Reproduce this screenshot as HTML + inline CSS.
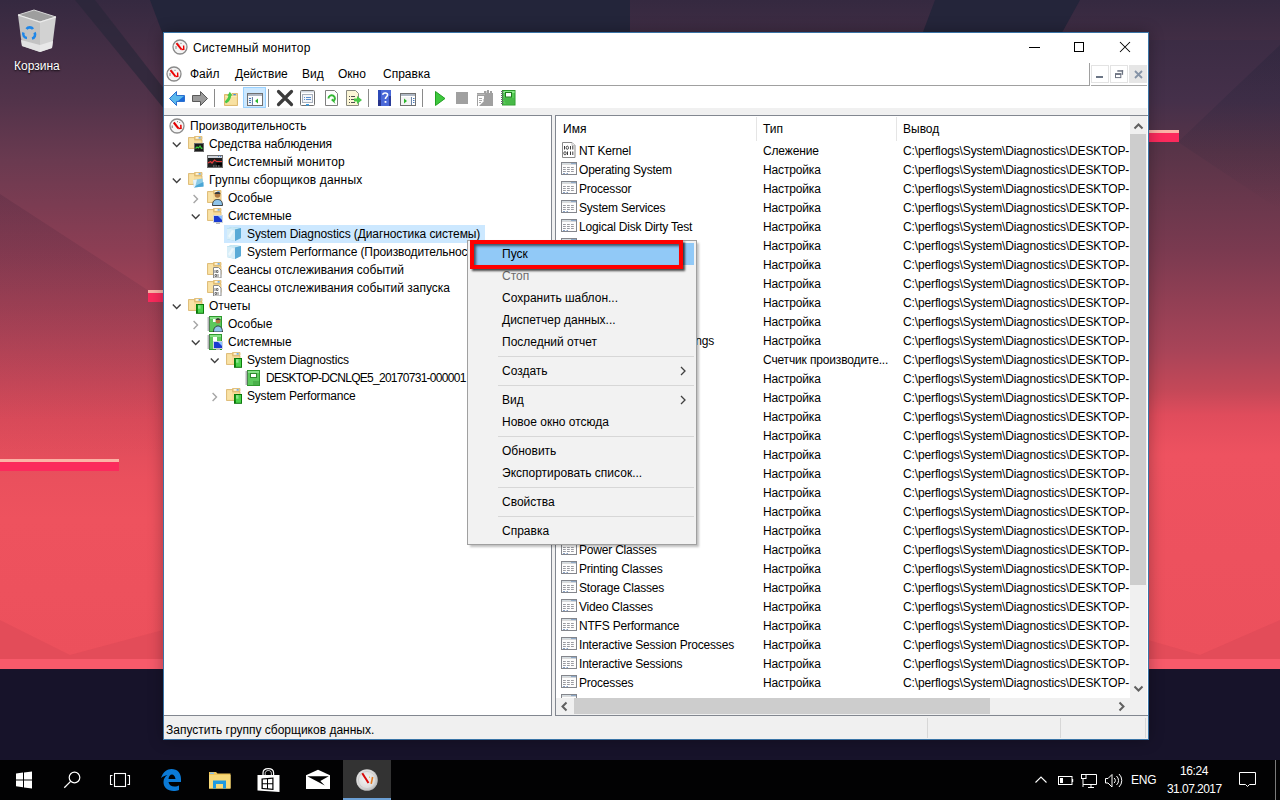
<!DOCTYPE html>
<html><head><meta charset="utf-8">
<style>
*{margin:0;padding:0;box-sizing:border-box}
html,body{width:1280px;height:800px;overflow:hidden;background:#17132a}
body{position:relative;font-family:"Liberation Sans",sans-serif;font-size:12px;color:#000}
.a{position:absolute}
.t{position:absolute;white-space:nowrap;line-height:14px;height:14px}
svg{display:block}
</style></head><body>

<svg width="0" height="0" style="position:absolute">
<defs>
<symbol id="i-perf" viewBox="0 0 16 16"><circle cx="8" cy="8" r="7" fill="#f6f6f6" stroke="#8c8c8c" stroke-width="1.3"/><path d="M3.2 7.5v2.5M5 4.2l.8.8M8.5 3.2v1M11 4l-.6.8" stroke="#666" stroke-width="0.9"/><path d="M4.8 4.5 L9.4 10.4" stroke="#e30000" stroke-width="2.1"/><path d="M9.3 10.5 L12 10.3 L11.8 6.8" stroke="#e30000" stroke-width="1.5" fill="none"/></symbol>
<symbol id="fold" viewBox="0 0 16 16"><path d="M6.5 0.5h7.5v3h-7.5z" fill="#f3d48c" stroke="#dcb66c" stroke-width="0.8"/><rect x="8" y="1.3" width="4.5" height="1.2" fill="#fff"/><rect x="10.5" y="1.2" width="2.3" height="1.4" rx="0.6" fill="#4a9ae8"/><path d="M0.5 1.5h6v2.5h7.5v8.5h-13.5z" fill="#f3d48c" stroke="#d8b268" stroke-width="0.8"/><rect x="1.2" y="2.3" width="5" height="9.5" fill="#f9e2a6"/><rect x="6.2" y="4.6" width="7.2" height="7.2" fill="#f7dc9c"/></symbol>
<symbol id="i-fmon" viewBox="0 0 16 16"><use href="#fold"/><rect x="6.5" y="7.5" width="9" height="8" fill="#1c1c1c" stroke="#6a6a6a"/><path d="M7.5 12.5 L9 11 L10.5 12 L12 10 L13.5 12.5 L14.5 12" fill="none" stroke="#3ad13a" stroke-width="1.2"/></symbol>
<symbol id="i-mon" viewBox="0 0 16 16"><rect x="0.5" y="1.5" width="15" height="12" fill="#1e1e1e" stroke="#6e6e6e"/><rect x="1" y="2" width="14" height="2" fill="#d0d4da"/><rect x="11" y="2" width="1" height="1" fill="#5a8ad0"/><rect x="13" y="2" width="1" height="1" fill="#5a8ad0"/><path d="M1 9 L3.5 7.5 L5 9 L7.5 6 L9.5 7.5 L15 7.5" fill="none" stroke="#e03a3a" stroke-width="1.2"/><rect x="9.5" y="9" width="5.5" height="2.5" fill="#000"/><path d="M6 12h1.5M8.5 12h1.5M11 12h1.5" stroke="#aaa" stroke-width="0.8"/></symbol>
<symbol id="i-fdc" viewBox="0 0 16 16"><use href="#fold"/><path d="M5 8 L14.5 6.5 L15.5 14.5 L6 15.5 Z" fill="#8ccbe6"/><path d="M5 8 L9 7.5 L7 15.5 L6 15.5 Z" fill="#e8f4fa"/><path d="M9 13 L15.5 10 L15.5 14.5 L6 15.5 Z" fill="#4aa6d6"/></symbol>
<symbol id="i-fuser" viewBox="0 0 16 16"><use href="#fold"/><circle cx="10.5" cy="5" r="2.8" fill="#b07840"/><path d="M7.5 4 C8 1 13 1 13.5 4 Z" fill="#3a3a3a"/><path d="M5.5 15.5 C5.5 11 7.5 9.5 10.5 9.5 C13.5 9.5 15.5 11 15.5 15.5 Z" fill="#8ec4ea" stroke="#1a1a1a" stroke-width="0.8"/></symbol>
<symbol id="i-fsys" viewBox="0 0 16 16"><use href="#fold"/><rect x="6.5" y="7.5" width="9" height="7" fill="#1a3ad0" stroke="#cfd6de"/><path d="M11 8 L15 8 L15 12 Z" fill="#8cc0ff"/><rect x="9" y="14.5" width="4" height="1.5" fill="#b8b8b8"/></symbol>
<symbol id="i-cube" viewBox="0 0 16 16"><path d="M1 2.5 L6 1 L15 2 L15 12 L9 15 L1 13 Z" fill="#8ecbe6"/><path d="M1 2.5 L6 1 L15 2 L9 3.5 Z" fill="#c8e8f4"/><path d="M1 2.5 L9 3.5 L9 15 L1 13 Z" fill="#d8eef8"/><path d="M9 3.5 L15 2 L15 12 L9 15 Z" fill="#5aaad6"/><path d="M2 10 L6 4 L8 5 L4 12 Z" fill="#fff" opacity="0.5"/></symbol>
<symbol id="i-fbin" viewBox="0 0 16 16"><use href="#fold"/><path d="M6.5 5.5h5l2.5 2.5v8h-7.5z" fill="#fff" stroke="#8a8a8a"/><path d="M8 8v3M9.5 8.5h1.5v2h-1.5zM8 12.5h1.5v2h-1.5zM11 12v3" fill="none" stroke="#555" stroke-width="0.8"/></symbol>
<symbol id="grb" viewBox="0 0 16 16"><rect x="8" y="6" width="8" height="9.8" fill="#067206"/><rect x="9.8" y="7" width="5.3" height="7.8" fill="#4bd24b"/><rect x="10" y="7.2" width="2.5" height="3.5" fill="#a8eca8" opacity="0.7"/><rect x="8.6" y="6.6" width="1.2" height="6" fill="#149a14"/></symbol>
<symbol id="i-frep" viewBox="0 0 16 16"><use href="#fold"/><use href="#grb"/></symbol>
<symbol id="nb" viewBox="0 0 16 16"><rect x="2.5" y="0.5" width="12" height="15" fill="#5cc85c" stroke="#2e9a2e"/><rect x="3" y="1" width="11" height="2" fill="#88e088"/><path d="M0.5 2h2.5M0.5 4h2.5M0.5 6h2.5M0.5 8h2.5M0.5 10h2.5M0.5 12h2.5M0.5 14h2.5" stroke="#6a6a70" stroke-width="1"/></symbol>
<symbol id="i-ruser" viewBox="0 0 16 16"><use href="#nb"/><rect x="6" y="3" width="3" height="3" fill="#fff"/><circle cx="11" cy="5" r="2.5" fill="#b07840"/><path d="M8.5 4 C9 1.5 13 1.5 13.5 4 Z" fill="#3a3a3a"/><path d="M6.5 16 C6.5 12 8.5 10 11 10 C13.5 10 15.5 12 15.5 16 Z" fill="#8ec4ea" stroke="#1a1a1a" stroke-width="0.8"/></symbol>
<symbol id="i-rsys" viewBox="0 0 16 16"><use href="#nb"/><rect x="6" y="3" width="4" height="4" fill="#fff"/><rect x="6.5" y="7.5" width="9" height="7" fill="#1a3ad0" stroke="#cfd6de"/><path d="M11 8 L15 8 L15 12 Z" fill="#8cc0ff"/><rect x="9" y="14.5" width="4" height="1.5" fill="#b8b8b8"/></symbol>
<symbol id="i-book" viewBox="0 0 16 16"><use href="#nb"/><rect x="5.5" y="3.5" width="6" height="4" fill="#fff" stroke="#2e8a2e"/><path d="M8 11h6v4h-6z" fill="#4ab04a"/></symbol>
<symbol id="i-lst" viewBox="0 0 16 16"><rect x="0.5" y="0.5" width="15" height="12" fill="#fdfdfd" stroke="#84868c"/><rect x="1" y="1" width="14" height="1.2" fill="#d4dce0"/><rect x="1" y="2.2" width="14" height="0.6" fill="#c8c8c8"/><path d="M10.5 1.6h1M12.5 1.6h1M14.5 1.6h0.6" stroke="#3a6aa8" stroke-width="1"/><path d="M2 5.5h2.8M6 5.5h2.8M10 5.5h2.8M2 7.5h2.8M6 7.5h2.8M10 7.5h2.8M2 9.5h2.8M6 9.5h2.8M10 9.5h2.8" stroke="#8e9096" stroke-width="0.9"/><path d="M2 11.5h2M5.5 11.5h1.5" stroke="#6a8ab8" stroke-width="0.8"/></symbol>
<symbol id="i-lbin" viewBox="0 0 16 16"><path d="M1.5 0.5h9.5l3 3v12h-12.5z" fill="#fff" stroke="#8a8a8a"/><path d="M11 0.5v3h3" fill="#eee" stroke="#aaa" stroke-width="0.7"/><path d="M3.5 4v3.5M9.5 4v3.5M11.8 4v3.5M6.5 9.5v3.5M9.5 9.5v3.5M11.8 9.5v3.5" stroke="#3a3a3a" stroke-width="1"/><ellipse cx="6.3" cy="5.75" rx="1.2" ry="1.6" fill="none" stroke="#3a3a3a" stroke-width="0.9"/><ellipse cx="4" cy="11.25" rx="1.2" ry="1.6" fill="none" stroke="#3a3a3a" stroke-width="0.9"/></symbol>
</defs></svg>

<!-- desktop background -->
<svg class="a" style="left:0;top:0" width="1280" height="760">
<defs>
<linearGradient id="bg" x1="0" y1="0" x2="0" y2="1">
<stop offset="0" stop-color="#352940"/>
<stop offset="0.152" stop-color="#52334a"/>
<stop offset="0.243" stop-color="#6a3a50"/>
<stop offset="0.379" stop-color="#8c3e54"/>
<stop offset="0.516" stop-color="#b54558"/>
<stop offset="0.637" stop-color="#dc4b5a"/>
<stop offset="0.728" stop-color="#ea505d"/>
<stop offset="0.789" stop-color="#ee525e"/>
<stop offset="1" stop-color="#ec505c"/>
</linearGradient>
</defs>
<rect x="0" y="0" width="1280" height="659" fill="url(#bg)"/>
<linearGradient id="bgr" x1="0" y1="0" x2="0" y2="659" gradientUnits="userSpaceOnUse">
<stop offset="0" stop-color="#352940"/>
<stop offset="0.152" stop-color="#45304a"/>
<stop offset="0.228" stop-color="#583448"/>
<stop offset="0.379" stop-color="#7a3a50"/>
<stop offset="0.531" stop-color="#a84458"/>
<stop offset="0.592" stop-color="#c44858"/>
<stop offset="0.630" stop-color="#e04c5c"/>
<stop offset="0.690" stop-color="#ee5260"/>
<stop offset="1" stop-color="#ec505c"/>
</linearGradient>
<rect x="1148" y="40" width="132" height="619" fill="url(#bgr)"/>
<polygon points="150,0 630,0 630,40 165,40" fill="#23253a"/>
<polygon points="935,0 1080,0 1058,40 920,40" fill="#24253a"/>
<polygon points="75,0 95,0 165,90 165,110" fill="#2a2639" opacity="0.7"/>
<linearGradient id="wg" x1="0" y1="0" x2="0" y2="1"><stop offset="0" stop-color="#1e2036" stop-opacity="0.3"/><stop offset="1" stop-color="#1e2036" stop-opacity="0"/></linearGradient><polygon points="1280,45 1178,142 1280,210" fill="url(#wg)"/>
<polygon points="0,620 70,655 163,630 163,659 0,659" fill="#c8404e" opacity="0.25"/>
<polygon points="1148,640 1200,655 1280,620 1280,659 1148,659" fill="#c8404e" opacity="0.25"/>
<linearGradient id="lg2" x1="0" y1="0" x2="0" y2="1"><stop offset="0" stop-color="#301830" stop-opacity="0.16"/><stop offset="1" stop-color="#301830" stop-opacity="0"/></linearGradient><polygon points="0,194 163,300 163,460 0,460" fill="url(#lg2)"/>
<rect x="0" y="659" width="1280" height="10" fill="#f75a6a"/>
<rect x="0" y="669" width="1280" height="91" fill="#17132a"/>
<rect x="0" y="459" width="119" height="3" fill="#fbb3a6"/>
<rect x="0" y="462" width="119" height="9" fill="#fb2a5c"/>
<rect x="148" y="290" width="15" height="3" fill="#fbb3a6"/>
<rect x="148" y="293" width="15" height="9" fill="#fb2a5c"/>
<rect x="1149" y="130" width="30" height="3" fill="#fbb3a6"/>
<rect x="1149" y="133" width="30" height="9" fill="#fb2a5c"/>
</svg>

<!-- recycle bin -->
<svg class="a" style="left:17px;top:9px" width="40" height="44" viewBox="17 9 40 44">
<polygon points="18,15 34,10 56,17 40,22" fill="#9e9e9e" stroke="#d8d8d8" stroke-width="1"/>
<polygon points="18,15 40,22 40,52 22,46" fill="#c2c2c2"/>
<polygon points="40,22 56,17 52,48 40,52" fill="#d2d2d2"/>
<polygon points="21,40 40,45 40,52 22,46" fill="#e2e2e2"/>
<polygon points="40,45 53,41 52,48 40,52" fill="#e8e8e8"/>
<path d="M18,15 L40,22 L56,17" fill="none" stroke="#ececec" stroke-width="1.2"/>
<path d="M26.5 29 a4 4 0 0 1 6.5 0 M34.5 32.5 a4 4 0 0 1 -2.5 6 M27 38 a4 4 0 0 1 -3.5 -5.5" fill="none" stroke="#1e86e8" stroke-width="2.6"/>
</svg>
<div class="t" style="left:14px;top:59px;color:#fff;text-shadow:0 1px 2px #000">Корзина</div>

<div id="win" class="a" style="left:163px;top:32px;width:986px;height:708px;background:#fff;border:1px solid #3a74a6;box-shadow:0 0 14px rgba(0,0,0,0.3)"></div>
<!-- title -->
<svg class="a" style="left:172px;top:39px" width="16" height="16" viewBox="0 0 16 16"><circle cx="8" cy="8" r="7" fill="#f4f4f4" stroke="#8a8a8a" stroke-width="1.3"/><path d="M4.5 4.2 L9.5 10.5" stroke="#e00" stroke-width="2"/><path d="M9.5 10.5 L11.8 10.3 L11.6 6.5" stroke="#e00" stroke-width="1.4" fill="none"/><path d="M4 7v3M6 4.5l1 1M9 3.8v1.2" stroke="#777" stroke-width="0.9"/></svg>
<div class="t" style="left:193px;top:41px;letter-spacing:0.22px">Системный монитор</div>
<div class="a" style="left:1029px;top:47px;width:11px;height:1px;background:#000"></div>
<div class="a" style="left:1074px;top:42px;width:10px;height:10px;border:1px solid #000"></div>
<svg class="a" style="left:1119px;top:41px" width="12" height="12" viewBox="0 0 12 12"><path d="M1 1L11 11M11 1L1 11" stroke="#000" stroke-width="1.05"/></svg>

<!-- menu bar -->
<svg class="a" style="left:166px;top:66px" width="16" height="16" viewBox="0 0 16 16"><circle cx="8" cy="8" r="7" fill="#f4f4f4" stroke="#8a8a8a" stroke-width="1.3"/><path d="M4.5 4.2 L9.5 10.5" stroke="#e00" stroke-width="2"/><path d="M9.5 10.5 L11.8 10.3 L11.6 6.5" stroke="#e00" stroke-width="1.4" fill="none"/><path d="M4 7v3M6 4.5l1 1M9 3.8v1.2" stroke="#777" stroke-width="0.9"/></svg>
<div class="t" style="left:190px;top:67px">Файл</div>
<div class="t" style="left:235px;top:67px">Действие</div>
<div class="t" style="left:302px;top:67px">Вид</div>
<div class="t" style="left:338px;top:67px">Окно</div>
<div class="t" style="left:383px;top:67px">Справка</div>
<div class="a" style="left:164px;top:85px;width:925px;height:1px;background:#a0a0a0"></div>
<div class="a" style="left:1089px;top:63px;width:1px;height:23px;background:#a0a0a0"></div>
<div class="a" style="left:1091px;top:85px;width:56px;height:1px;background:#a8a8a8"></div>
<div class="a" style="left:1091px;top:65px;width:18px;height:18px;border:1px solid #e3e3e3;background:#fff"></div>
<div class="a" style="left:1096px;top:76px;width:7px;height:2px;background:#6b7585"></div>
<div class="a" style="left:1110px;top:65px;width:18px;height:18px;border:1px solid #e3e3e3;background:#fff"></div>
<svg class="a" style="left:1114px;top:69px" width="11" height="11" viewBox="1114 69 11 11"><rect x="1117.3" y="70.2" width="5.8" height="1.5" fill="#6b7280"/><rect x="1121.8" y="70.2" width="1.3" height="4.6" fill="#6b7280"/><rect x="1115.5" y="73.8" width="5.3" height="3.8" fill="none" stroke="#6b7280" stroke-width="1"/><rect x="1115" y="73.3" width="6.3" height="1.6" fill="#6b7280"/></svg>
<div class="a" style="left:1129px;top:65px;width:18px;height:18px;background:#e6e6e6"></div>
<svg class="a" style="left:1134px;top:70px" width="9" height="9" viewBox="0 0 9 9"><path d="M1 1L8 8M8 1L1 8" stroke="#8593a6" stroke-width="1.8"/></svg>

<!-- toolbar strip -->
<div class="a" style="left:164px;top:108px;width:983px;height:7px;background:#f0f0f0"></div>
<svg class="a" style="left:164px;top:86px" width="360" height="22" viewBox="164 86 360 22">
<!-- back -->
<path d="M169.5 98.5 L176.5 91.5 L176.5 95.5 L184.5 95.5 L184.5 101.5 L176.5 101.5 L176.5 105.5 Z" fill="#5ab8ec" stroke="#2a6fcf" stroke-width="1"/>
<path d="M178 101 L184 96 L184 101 Z" fill="#1a6ad8"/>
<!-- forward -->
<path d="M207.5 98.5 L200.5 91.5 L200.5 95.5 L192.5 95.5 L192.5 101.5 L200.5 101.5 L200.5 105.5 Z" fill="#9a9a9a" stroke="#5a5a5a" stroke-width="1"/>
<rect x="214" y="89" width="1" height="18" fill="#8a8a8a"/>
<!-- up folder -->
<path d="M224.5 94.5 H231 L232 93.5 H237.5 V105.5 H224.5 Z" fill="#f2d289" stroke="#d6ad5c" stroke-width="0.8"/>
<rect x="225.3" y="96.5" width="11.4" height="8.3" fill="#f8e1a2"/>
<rect x="225.3" y="96" width="11.4" height="1" fill="#fbeab8"/>
<rect x="233.3" y="94" width="2.6" height="1.3" rx="0.6" fill="#3d8fe8"/>
<path d="M226.3 101.8 C228 100.5 229.6 98.5 230 95" fill="none" stroke="#48c948" stroke-width="2.6" stroke-linecap="round"/>
<path d="M227.3 96 L229.8 91.8 L232.4 95.6 Z" fill="#48c948"/>
<!-- pressed button -->
<rect x="243.5" y="87.5" width="22" height="20" fill="#cce8ff" stroke="#99d1ff"/>
<rect x="247.5" y="93.5" width="15" height="12" fill="#fff" stroke="#707070"/>
<rect x="248" y="94" width="14" height="2" fill="#b0b8c4"/>
<rect x="248" y="97" width="4" height="8" fill="#eef2f6"/>
<rect x="252" y="97" width="1" height="8" fill="#6a84a8"/>
<path d="M249 98.5h2M249 100.5h2M249 102.5h2" stroke="#4a7ab8"/>
<path d="M255 101 L258 98.5 L258 103.5 Z" fill="#2cb82c"/>
<rect x="268" y="89" width="1" height="18" fill="#8a8a8a"/>
<!-- delete X -->
<path d="M278.5 91.5 L291.5 104.5 M291.5 91.5 L278.5 104.5" stroke="#3c3c3c" stroke-width="3.2" stroke-linecap="round"/>
<!-- properties -->
<rect x="300.5" y="90.5" width="14" height="15" rx="1" fill="#fff" stroke="#707070"/>
<rect x="301" y="91" width="13" height="1.5" fill="#cfd6df"/>
<rect x="302.5" y="94.5" width="10" height="8" fill="#f3f5f8" stroke="#a8b0bc"/>
<path d="M304 97.5h1M306 97.5h5M304 99.5h1M306 99.5h5" stroke="#5a8fd0"/>
<rect x="306" y="104" width="3" height="1.5" fill="#3aa0e8"/>
<!-- refresh doc -->
<path d="M325.5 90.5 h9 l3 3 v12 h-12 z" fill="#fff" stroke="#808080"/>
<path d="M328.5 98.5 a3.2 3.2 0 1 1 5 2.6" fill="none" stroke="#35b835" stroke-width="2"/>
<path d="M331 100 L335.5 104 L333 98.5 Z" fill="#35b835"/>
<!-- export -->
<path d="M346.5 90.5 h9 l3 3 v12 h-12 z" fill="#fcf6d6" stroke="#8a8a80"/>
<path d="M349 96.5h1M351 96.5h4M349 99.5h1M351 99.5h4M349 102.5h1M351 102.5h4" stroke="#505050"/>
<path d="M354 98.5 h3 v-2.5 l5 4 l-5 4 v-2.5 h-3 z" fill="#48c848"/>
<rect x="368" y="89" width="1" height="18" fill="#8a8a8a"/>
<!-- help -->
<rect x="378" y="90" width="13" height="16" fill="#4a68d8"/>
<rect x="378" y="90" width="3" height="16" fill="#2c4ab8"/>
<rect x="378" y="100" width="3" height="6" fill="#27338a"/>
<rect x="389" y="96" width="2" height="10" fill="#2a3c9a"/>
<path d="M382.8 94.8 c0 -2.5 4.8 -2.5 4.8 0 c0 2 -2.2 2 -2.2 4.2" fill="none" stroke="#fff" stroke-width="1.6"/>
<rect x="384.6" y="101" width="1.8" height="1.8" fill="#fff"/>
<!-- action pane -->
<rect x="400.5" y="93.5" width="15" height="12" fill="#fff" stroke="#707070"/>
<rect x="401" y="94" width="14" height="2" fill="#b0b8c4"/>
<rect x="411" y="97" width="1" height="8" fill="#6a84a8"/>
<path d="M413 98.5h1.5M413 100.5h1.5M413 102.5h1.5" stroke="#4a7ab8"/>
<rect x="401" y="97" width="10" height="8" fill="#f4f4f4"/>
<path d="M404 98.5 L407 101 L404 103.5 Z" fill="#2cb82c"/>
<rect x="422" y="89" width="1" height="18" fill="#8a8a8a"/>
<!-- play -->
<path d="M435.5 91.5 L445 98.5 L435.5 105.5 Z" fill="#3ec83e" stroke="#22a022"/>
<!-- stop -->
<rect x="456" y="92" width="12" height="12" fill="#a0a0a0"/>
<!-- gray report -->
<path d="M477 93 H484 V91 H486.5 V93 H487 V90 H489 V93 H490 V91 H492 V93 H493 V106 H477 Z" fill="#a0a0a0"/>
<rect x="477" y="94" width="8" height="1" fill="#b8b8b8"/>
<path d="M478 96 H484 V99 L483 100 L484 101 L481 104 L479 106 H478 Z" fill="#fff"/>
<path d="M479 98.5h3M479 100.5h3M479 102.5h2" stroke="#a0a0a0" stroke-width="0.9"/>
<!-- green notebook -->
<rect x="502.5" y="90.5" width="12.5" height="14.5" fill="#56cc56" stroke="#2a9a2a"/>
<rect x="503" y="91" width="11.5" height="2" fill="#86e886"/>
<rect x="505.5" y="92.5" width="6" height="4.5" fill="#fff" stroke="#1e7a1e" stroke-width="1"/>
<path d="M503.5 98 L514.5 98 L514.5 104.5 L506 104.5 Z" fill="#3fae3f" opacity="0.6"/>
<path d="M501 91.5h2.5M501 93.5h2.5M501 95.5h2.5M501 97.5h2.5M501 99.5h2.5M501 101.5h2.5M501 103.5h2.5" stroke="#6a6a70" stroke-width="1"/>
</svg>

<!-- tree panel -->
<div class="a" style="left:164px;top:115px;width:388px;height:601px;border:1px solid #828790;border-left:0;background:#fff"></div>
<div class="a" style="left:552px;top:115px;width:3px;height:601px;background:#f0f0f0"></div>
<!-- list panel -->
<div class="a" style="left:555px;top:115px;width:593px;height:601px;border:1px solid #828790;border-right:0;background:#fff"></div>
<div id="tree"></div>
<div class="a" style="left:224px;top:225px;width:261px;height:18px;background:#cce8ff"></div>
<svg class="a" style="left:169px;top:118px" width="16" height="16"><use href="#i-perf"/></svg>
<div class="t" style="left:190px;top:119px;letter-spacing:0px">Производительность</div>
<svg class="a" style="left:172px;top:135px" width="10" height="18"><path d="M0.8 7.6 L4.7 11.5 L8.6 7.6" fill="none" stroke="#404040" stroke-width="1.4"/></svg>
<svg class="a" style="left:188px;top:136px" width="16" height="16"><use href="#i-fmon"/></svg>
<div class="t" style="left:209px;top:137px;letter-spacing:-0.13px">Средства наблюдения</div>
<svg class="a" style="left:207px;top:154px" width="16" height="16"><use href="#i-mon"/></svg>
<div class="t" style="left:228px;top:155px;letter-spacing:0.18px">Системный монитор</div>
<svg class="a" style="left:172px;top:171px" width="10" height="18"><path d="M0.8 7.6 L4.7 11.5 L8.6 7.6" fill="none" stroke="#404040" stroke-width="1.4"/></svg>
<svg class="a" style="left:188px;top:172px" width="16" height="16"><use href="#i-fdc"/></svg>
<div class="t" style="left:209px;top:173px;letter-spacing:0.17px">Группы сборщиков данных</div>
<svg class="a" style="left:191px;top:189px" width="10" height="18"><path d="M2.6 6.1 L6.5 10 L2.6 13.9" fill="none" stroke="#a6a6a6" stroke-width="1.4"/></svg>
<svg class="a" style="left:207px;top:190px" width="16" height="16"><use href="#i-fuser"/></svg>
<div class="t" style="left:228px;top:191px;letter-spacing:0px">Особые</div>
<svg class="a" style="left:191px;top:207px" width="10" height="18"><path d="M0.8 7.6 L4.7 11.5 L8.6 7.6" fill="none" stroke="#404040" stroke-width="1.4"/></svg>
<svg class="a" style="left:207px;top:208px" width="16" height="16"><use href="#i-fsys"/></svg>
<div class="t" style="left:228px;top:209px;letter-spacing:0px">Системные</div>
<svg class="a" style="left:226px;top:226px" width="16" height="16"><use href="#i-cube"/></svg>
<div class="t" style="left:247px;top:227px;letter-spacing:-0.1px">System Diagnostics (Диагностика системы)</div>
<svg class="a" style="left:226px;top:244px" width="16" height="16"><use href="#i-cube"/></svg>
<div class="t" style="left:247px;top:245px;letter-spacing:-0.1px">System Performance (Производительность системы)</div>
<svg class="a" style="left:207px;top:262px" width="16" height="16"><use href="#i-fbin"/></svg>
<div class="t" style="left:228px;top:263px;letter-spacing:0px">Сеансы отслеживания событий</div>
<svg class="a" style="left:207px;top:280px" width="16" height="16"><use href="#i-fbin"/></svg>
<div class="t" style="left:228px;top:281px;letter-spacing:0px">Сеансы отслеживания событий запуска</div>
<svg class="a" style="left:172px;top:297px" width="10" height="18"><path d="M0.8 7.6 L4.7 11.5 L8.6 7.6" fill="none" stroke="#404040" stroke-width="1.4"/></svg>
<svg class="a" style="left:188px;top:298px" width="16" height="16"><use href="#i-frep"/></svg>
<div class="t" style="left:209px;top:299px;letter-spacing:0px">Отчеты</div>
<svg class="a" style="left:191px;top:315px" width="10" height="18"><path d="M2.6 6.1 L6.5 10 L2.6 13.9" fill="none" stroke="#a6a6a6" stroke-width="1.4"/></svg>
<svg class="a" style="left:207px;top:316px" width="16" height="16"><use href="#i-ruser"/></svg>
<div class="t" style="left:228px;top:317px;letter-spacing:0px">Особые</div>
<svg class="a" style="left:191px;top:333px" width="10" height="18"><path d="M0.8 7.6 L4.7 11.5 L8.6 7.6" fill="none" stroke="#404040" stroke-width="1.4"/></svg>
<svg class="a" style="left:207px;top:334px" width="16" height="16"><use href="#i-rsys"/></svg>
<div class="t" style="left:228px;top:335px;letter-spacing:0px">Системные</div>
<svg class="a" style="left:210px;top:351px" width="10" height="18"><path d="M0.8 7.6 L4.7 11.5 L8.6 7.6" fill="none" stroke="#404040" stroke-width="1.4"/></svg>
<svg class="a" style="left:226px;top:352px" width="16" height="16"><use href="#i-frep"/></svg>
<div class="t" style="left:247px;top:353px;letter-spacing:-0.2px">System Diagnostics</div>
<svg class="a" style="left:245px;top:370px" width="16" height="16"><use href="#i-book"/></svg>
<div class="t" style="left:266px;top:371px;letter-spacing:-0.72px">DESKTOP-DCNLQE5_20170731-000001</div>
<svg class="a" style="left:210px;top:387px" width="10" height="18"><path d="M2.6 6.1 L6.5 10 L2.6 13.9" fill="none" stroke="#a6a6a6" stroke-width="1.4"/></svg>
<svg class="a" style="left:226px;top:388px" width="16" height="16"><use href="#i-frep"/></svg>
<div class="t" style="left:247px;top:389px;letter-spacing:-0.2px">System Performance</div>
<!--/tree-->
<div id="list"></div>
<div class="a" style="left:556px;top:116px;width:574px;height:582px;overflow:hidden">
<div class="t" style="left:7px;top:6px">Имя</div>
<div class="t" style="left:207px;top:6px">Тип</div>
<div class="t" style="left:347px;top:6px">Вывод</div>
<div class="a" style="left:200px;top:1px;width:1px;height:24px;background:#e5e5e5"></div>
<div class="a" style="left:340px;top:1px;width:1px;height:24px;background:#e5e5e5"></div>
<svg class="a" style="left:5px;top:26px" width="16" height="16"><use href="#i-lbin"/></svg>
<div class="t" style="left:23px;top:28px;letter-spacing:-0.2px">NT Kernel</div>
<div class="t" style="left:207px;top:28px;letter-spacing:-0.15px">Слежение</div>
<div class="t" style="left:347px;top:28px;letter-spacing:-0.13px">C:\perflogs\System\Diagnostics\DESKTOP-</div>
<svg class="a" style="left:5px;top:46px" width="16" height="16"><use href="#i-lst"/></svg>
<div class="t" style="left:23px;top:47px;letter-spacing:-0.2px">Operating System</div>
<div class="t" style="left:207px;top:47px;letter-spacing:-0.15px">Настройка</div>
<div class="t" style="left:347px;top:47px;letter-spacing:-0.13px">C:\perflogs\System\Diagnostics\DESKTOP-</div>
<svg class="a" style="left:5px;top:65px" width="16" height="16"><use href="#i-lst"/></svg>
<div class="t" style="left:23px;top:66px;letter-spacing:-0.2px">Processor</div>
<div class="t" style="left:207px;top:66px;letter-spacing:-0.15px">Настройка</div>
<div class="t" style="left:347px;top:66px;letter-spacing:-0.13px">C:\perflogs\System\Diagnostics\DESKTOP-</div>
<svg class="a" style="left:5px;top:84px" width="16" height="16"><use href="#i-lst"/></svg>
<div class="t" style="left:23px;top:85px;letter-spacing:-0.2px">System Services</div>
<div class="t" style="left:207px;top:85px;letter-spacing:-0.15px">Настройка</div>
<div class="t" style="left:347px;top:85px;letter-spacing:-0.13px">C:\perflogs\System\Diagnostics\DESKTOP-</div>
<svg class="a" style="left:5px;top:103px" width="16" height="16"><use href="#i-lst"/></svg>
<div class="t" style="left:23px;top:104px;letter-spacing:-0.2px">Logical Disk Dirty Test</div>
<div class="t" style="left:207px;top:104px;letter-spacing:-0.15px">Настройка</div>
<div class="t" style="left:347px;top:104px;letter-spacing:-0.13px">C:\perflogs\System\Diagnostics\DESKTOP-</div>
<svg class="a" style="left:5px;top:122px" width="16" height="16"><use href="#i-lst"/></svg>
<div class="t" style="left:23px;top:123px;letter-spacing:-0.2px">Disk Drive</div>
<div class="t" style="left:207px;top:123px;letter-spacing:-0.15px">Настройка</div>
<div class="t" style="left:347px;top:123px;letter-spacing:-0.13px">C:\perflogs\System\Diagnostics\DESKTOP-</div>
<svg class="a" style="left:5px;top:141px" width="16" height="16"><use href="#i-lst"/></svg>
<div class="t" style="left:23px;top:142px;letter-spacing:-0.2px">Cooling Classes</div>
<div class="t" style="left:207px;top:142px;letter-spacing:-0.15px">Настройка</div>
<div class="t" style="left:347px;top:142px;letter-spacing:-0.13px">C:\perflogs\System\Diagnostics\DESKTOP-</div>
<svg class="a" style="left:5px;top:160px" width="16" height="16"><use href="#i-lst"/></svg>
<div class="t" style="left:23px;top:161px;letter-spacing:-0.2px">Audio Settings</div>
<div class="t" style="left:207px;top:161px;letter-spacing:-0.15px">Настройка</div>
<div class="t" style="left:347px;top:161px;letter-spacing:-0.13px">C:\perflogs\System\Diagnostics\DESKTOP-</div>
<svg class="a" style="left:5px;top:179px" width="16" height="16"><use href="#i-lst"/></svg>
<div class="t" style="left:23px;top:180px;letter-spacing:-0.2px">Network Adapters</div>
<div class="t" style="left:207px;top:180px;letter-spacing:-0.15px">Настройка</div>
<div class="t" style="left:347px;top:180px;letter-spacing:-0.13px">C:\perflogs\System\Diagnostics\DESKTOP-</div>
<svg class="a" style="left:5px;top:198px" width="16" height="16"><use href="#i-lst"/></svg>
<div class="t" style="left:23px;top:199px;letter-spacing:-0.2px">Windows Update</div>
<div class="t" style="left:207px;top:199px;letter-spacing:-0.15px">Настройка</div>
<div class="t" style="left:347px;top:199px;letter-spacing:-0.13px">C:\perflogs\System\Diagnostics\DESKTOP-</div>
<svg class="a" style="left:5px;top:217px" width="16" height="16"><use href="#i-lst"/></svg>
<div class="t" style="left:23px;top:218px;letter-spacing:-0.2px">Windows Firewall Settings</div>
<div class="t" style="left:207px;top:218px;letter-spacing:-0.15px">Настройка</div>
<div class="t" style="left:347px;top:218px;letter-spacing:-0.13px">C:\perflogs\System\Diagnostics\DESKTOP-</div>
<svg class="a" style="left:5px;top:236px" width="16" height="16"><use href="#i-lst"/></svg>
<div class="t" style="left:23px;top:237px;letter-spacing:-0.2px">Counters</div>
<div class="t" style="left:207px;top:237px;letter-spacing:-0.15px">Счетчик производите...</div>
<div class="t" style="left:347px;top:237px;letter-spacing:-0.13px">C:\perflogs\System\Diagnostics\DESKTOP-</div>
<svg class="a" style="left:5px;top:255px" width="16" height="16"><use href="#i-lst"/></svg>
<div class="t" style="left:23px;top:256px;letter-spacing:-0.2px">Battery Classes</div>
<div class="t" style="left:207px;top:256px;letter-spacing:-0.15px">Настройка</div>
<div class="t" style="left:347px;top:256px;letter-spacing:-0.13px">C:\perflogs\System\Diagnostics\DESKTOP-</div>
<svg class="a" style="left:5px;top:274px" width="16" height="16"><use href="#i-lst"/></svg>
<div class="t" style="left:23px;top:275px;letter-spacing:-0.2px">Basic System Classes</div>
<div class="t" style="left:207px;top:275px;letter-spacing:-0.15px">Настройка</div>
<div class="t" style="left:347px;top:275px;letter-spacing:-0.13px">C:\perflogs\System\Diagnostics\DESKTOP-</div>
<svg class="a" style="left:5px;top:293px" width="16" height="16"><use href="#i-lst"/></svg>
<div class="t" style="left:23px;top:294px;letter-spacing:-0.2px">CDROM Classes</div>
<div class="t" style="left:207px;top:294px;letter-spacing:-0.15px">Настройка</div>
<div class="t" style="left:347px;top:294px;letter-spacing:-0.13px">C:\perflogs\System\Diagnostics\DESKTOP-</div>
<svg class="a" style="left:5px;top:312px" width="16" height="16"><use href="#i-lst"/></svg>
<div class="t" style="left:23px;top:313px;letter-spacing:-0.2px">Device Classes</div>
<div class="t" style="left:207px;top:313px;letter-spacing:-0.15px">Настройка</div>
<div class="t" style="left:347px;top:313px;letter-spacing:-0.13px">C:\perflogs\System\Diagnostics\DESKTOP-</div>
<svg class="a" style="left:5px;top:331px" width="16" height="16"><use href="#i-lst"/></svg>
<div class="t" style="left:23px;top:332px;letter-spacing:-0.2px">Display Classes</div>
<div class="t" style="left:207px;top:332px;letter-spacing:-0.15px">Настройка</div>
<div class="t" style="left:347px;top:332px;letter-spacing:-0.13px">C:\perflogs\System\Diagnostics\DESKTOP-</div>
<svg class="a" style="left:5px;top:350px" width="16" height="16"><use href="#i-lst"/></svg>
<div class="t" style="left:23px;top:351px;letter-spacing:-0.2px">Keyboard Classes</div>
<div class="t" style="left:207px;top:351px;letter-spacing:-0.15px">Настройка</div>
<div class="t" style="left:347px;top:351px;letter-spacing:-0.13px">C:\perflogs\System\Diagnostics\DESKTOP-</div>
<svg class="a" style="left:5px;top:369px" width="16" height="16"><use href="#i-lst"/></svg>
<div class="t" style="left:23px;top:370px;letter-spacing:-0.2px">Mouse Classes</div>
<div class="t" style="left:207px;top:370px;letter-spacing:-0.15px">Настройка</div>
<div class="t" style="left:347px;top:370px;letter-spacing:-0.13px">C:\perflogs\System\Diagnostics\DESKTOP-</div>
<svg class="a" style="left:5px;top:388px" width="16" height="16"><use href="#i-lst"/></svg>
<div class="t" style="left:23px;top:389px;letter-spacing:-0.2px">Network Classes</div>
<div class="t" style="left:207px;top:389px;letter-spacing:-0.15px">Настройка</div>
<div class="t" style="left:347px;top:389px;letter-spacing:-0.13px">C:\perflogs\System\Diagnostics\DESKTOP-</div>
<svg class="a" style="left:5px;top:407px" width="16" height="16"><use href="#i-lst"/></svg>
<div class="t" style="left:23px;top:408px;letter-spacing:-0.2px">Port Classes</div>
<div class="t" style="left:207px;top:408px;letter-spacing:-0.15px">Настройка</div>
<div class="t" style="left:347px;top:408px;letter-spacing:-0.13px">C:\perflogs\System\Diagnostics\DESKTOP-</div>
<svg class="a" style="left:5px;top:426px" width="16" height="16"><use href="#i-lst"/></svg>
<div class="t" style="left:23px;top:427px;letter-spacing:-0.2px">Power Classes</div>
<div class="t" style="left:207px;top:427px;letter-spacing:-0.15px">Настройка</div>
<div class="t" style="left:347px;top:427px;letter-spacing:-0.13px">C:\perflogs\System\Diagnostics\DESKTOP-</div>
<svg class="a" style="left:5px;top:445px" width="16" height="16"><use href="#i-lst"/></svg>
<div class="t" style="left:23px;top:446px;letter-spacing:-0.2px">Printing Classes</div>
<div class="t" style="left:207px;top:446px;letter-spacing:-0.15px">Настройка</div>
<div class="t" style="left:347px;top:446px;letter-spacing:-0.13px">C:\perflogs\System\Diagnostics\DESKTOP-</div>
<svg class="a" style="left:5px;top:464px" width="16" height="16"><use href="#i-lst"/></svg>
<div class="t" style="left:23px;top:465px;letter-spacing:-0.2px">Storage Classes</div>
<div class="t" style="left:207px;top:465px;letter-spacing:-0.15px">Настройка</div>
<div class="t" style="left:347px;top:465px;letter-spacing:-0.13px">C:\perflogs\System\Diagnostics\DESKTOP-</div>
<svg class="a" style="left:5px;top:483px" width="16" height="16"><use href="#i-lst"/></svg>
<div class="t" style="left:23px;top:484px;letter-spacing:-0.2px">Video Classes</div>
<div class="t" style="left:207px;top:484px;letter-spacing:-0.15px">Настройка</div>
<div class="t" style="left:347px;top:484px;letter-spacing:-0.13px">C:\perflogs\System\Diagnostics\DESKTOP-</div>
<svg class="a" style="left:5px;top:502px" width="16" height="16"><use href="#i-lst"/></svg>
<div class="t" style="left:23px;top:503px;letter-spacing:-0.2px">NTFS Performance</div>
<div class="t" style="left:207px;top:503px;letter-spacing:-0.15px">Настройка</div>
<div class="t" style="left:347px;top:503px;letter-spacing:-0.13px">C:\perflogs\System\Diagnostics\DESKTOP-</div>
<svg class="a" style="left:5px;top:521px" width="16" height="16"><use href="#i-lst"/></svg>
<div class="t" style="left:23px;top:522px;letter-spacing:-0.2px">Interactive Session Processes</div>
<div class="t" style="left:207px;top:522px;letter-spacing:-0.15px">Настройка</div>
<div class="t" style="left:347px;top:522px;letter-spacing:-0.13px">C:\perflogs\System\Diagnostics\DESKTOP-</div>
<svg class="a" style="left:5px;top:540px" width="16" height="16"><use href="#i-lst"/></svg>
<div class="t" style="left:23px;top:541px;letter-spacing:-0.2px">Interactive Sessions</div>
<div class="t" style="left:207px;top:541px;letter-spacing:-0.15px">Настройка</div>
<div class="t" style="left:347px;top:541px;letter-spacing:-0.13px">C:\perflogs\System\Diagnostics\DESKTOP-</div>
<svg class="a" style="left:5px;top:559px" width="16" height="16"><use href="#i-lst"/></svg>
<div class="t" style="left:23px;top:560px;letter-spacing:-0.2px">Processes</div>
<div class="t" style="left:207px;top:560px;letter-spacing:-0.15px">Настройка</div>
<div class="t" style="left:347px;top:560px;letter-spacing:-0.13px">C:\perflogs\System\Diagnostics\DESKTOP-</div>
<svg class="a" style="left:5px;top:578px" width="16" height="16"><use href="#i-lst"/></svg>
</div>
<div class="a" style="left:1130px;top:116px;width:17px;height:582px;background:#f0f0f0"></div>
<div class="a" style="left:1130px;top:134px;width:16px;height:451px;background:#cdcdcd"></div>
<svg class="a" style="left:1130px;top:118px" width="17" height="17"><path d="M4.5 10.5 L8.5 6.5 L12.5 10.5" fill="none" stroke="#606060" stroke-width="2"/></svg>
<svg class="a" style="left:1130px;top:680px" width="17" height="17"><path d="M4.5 6.5 L8.5 10.5 L12.5 6.5" fill="none" stroke="#606060" stroke-width="2"/></svg>
<div class="a" style="left:556px;top:698px;width:591px;height:17px;background:#f0f0f0"></div>
<div class="a" style="left:574px;top:698px;width:416px;height:16px;background:#cdcdcd"></div>
<svg class="a" style="left:556px;top:698px" width="17" height="17"><path d="M10.5 4.5 L6.5 8.5 L10.5 12.5" fill="none" stroke="#606060" stroke-width="2"/></svg>
<svg class="a" style="left:1113px;top:698px" width="17" height="17"><path d="M6.5 4.5 L10.5 8.5 L6.5 12.5" fill="none" stroke="#606060" stroke-width="2"/></svg>
<!--/list-->

<!-- status bar -->
<div class="a" style="left:164px;top:716px;width:984px;height:23px;background:#f0f0f0"></div>
<div class="t" style="left:166px;top:723px">Запустить группу сборщиков данных.</div>
<div class="a" style="left:927px;top:718px;width:1px;height:20px;background:#d7d7d7"></div>
<div class="a" style="left:1060px;top:718px;width:1px;height:20px;background:#d7d7d7"></div>
<div class="a" style="left:1145px;top:718px;width:1px;height:20px;background:#d7d7d7"></div>

<!-- menu -->
<div class="a" style="left:470px;top:243px;width:229px;height:304px;background:rgba(0,0,0,0.25);filter:blur(1px)"></div>
<div class="a" style="left:467px;top:240px;width:230px;height:305px;background:#f2f2f2;border:1px solid #a0a0a0"></div>
<div class="a" style="left:470px;top:243px;width:224px;height:22px;background:#91c9f7"></div>
<div class="t" style="left:502px;top:247px;color:#000">Пуск</div>
<div class="t" style="left:502px;top:269px;color:#6d6d6d">Стоп</div>
<div class="t" style="left:502px;top:291px;color:#000">Сохранить шаблон...</div>
<div class="t" style="left:502px;top:313px;color:#000">Диспетчер данных...</div>
<div class="t" style="left:502px;top:335px;color:#000">Последний отчет</div>
<div class="a" style="left:498px;top:356px;width:196px;height:1px;background:#d7d7d7"></div>
<div class="t" style="left:502px;top:364px;color:#000">Создать</div>
<svg class="a" style="left:678px;top:360px" width="10" height="22"><path d="M3 7 L7 11 L3 15" fill="none" stroke="#404040" stroke-width="1.3"/></svg>
<div class="a" style="left:498px;top:385px;width:196px;height:1px;background:#d7d7d7"></div>
<div class="t" style="left:502px;top:393px;color:#000">Вид</div>
<svg class="a" style="left:678px;top:389px" width="10" height="22"><path d="M3 7 L7 11 L3 15" fill="none" stroke="#404040" stroke-width="1.3"/></svg>
<div class="t" style="left:502px;top:415px;color:#000">Новое окно отсюда</div>
<div class="a" style="left:498px;top:436px;width:196px;height:1px;background:#d7d7d7"></div>
<div class="t" style="left:502px;top:444px;color:#000">Обновить</div>
<div class="t" style="left:502px;top:466px;color:#000">Экспортировать список...</div>
<div class="a" style="left:498px;top:487px;width:196px;height:1px;background:#d7d7d7"></div>
<div class="t" style="left:502px;top:495px;color:#000">Свойства</div>
<div class="a" style="left:498px;top:516px;width:196px;height:1px;background:#d7d7d7"></div>
<div class="t" style="left:502px;top:524px;color:#000">Справка</div>
<div class="a" style="left:470px;top:240px;width:213px;height:29px;border:4px solid #ff0000;box-shadow:2px 2px 2px rgba(0,0,0,0.7)"></div>
<div class="a" style="left:474px;top:244px;width:205px;height:21px;box-shadow:inset 2px 2px 3px rgba(0,0,0,0.6)"></div>
<!--/menu-->
<!-- taskbar -->
<div class="a" style="left:0;top:760px;width:1280px;height:40px;background:#020203"></div>
<svg class="a" style="left:0;top:760px" width="1280" height="40" viewBox="0 760 1280 40">
<!-- start -->
<path d="M16 773.6 L23 772.6 V779.4 H16 Z M24 772.5 L32 771.4 V779.4 H24 Z M16 780.4 H23 V787.3 L16 786.3 Z M24 780.4 H32 V788.5 L24 787.4 Z" fill="#fff"/>
<!-- search -->
<circle cx="74.5" cy="777.5" r="5.3" fill="none" stroke="#fff" stroke-width="1.2"/>
<path d="M70.6 781.4 L64.3 787.7" stroke="#fff" stroke-width="1.3"/>
<!-- task view -->
<rect x="114.5" y="773.5" width="11" height="13" fill="none" stroke="#fff" stroke-width="1.1"/>
<path d="M112.5 775.5 h-2 v9 h2 M127.5 775.5 h2 v9 h-2" fill="none" stroke="#fff" stroke-width="1.1"/>
<!-- edge -->
<path fill-rule="evenodd" d="M161,778 C163,772 167,769 171.5,769 C177.5,769 181,773 181,779 V782 H168.5 C169,785 171.5,786.5 174.5,786.5 C176.5,786.5 178,786 179,785.5 V790 C177.5,790.8 175.5,791 173.5,791 C167.5,791 163.5,787.5 163.5,782 C163.5,779 165,776.5 167.5,775 C165,775.5 162.5,776.5 161,778 Z M168.5,779 H175.5 C175.2,776 173.5,774.5 172,774.5 C170.2,774.5 168.8,776 168.5,779 Z" fill="#0b7ad6"/>
<!-- explorer -->
<path d="M209 772 h7 l1.5 1.5 h13 v15 h-21.5 z" fill="#f0c65a"/>
<rect x="209" y="775" width="21.5" height="13.5" fill="#f8d978"/>
<path d="M213 780.5 h13 v8 h-3 v-4.5 h-7 v4.5 h-3 z" fill="#1e9ae0"/>
<rect x="210" y="772.5" width="4" height="1.5" fill="#88c0e8"/>
<!-- store -->
<path d="M257.5 775 h22 v17 l-22 -1.5 z" fill="#fff"/>
<path d="M263 775 v-2 c0 -2.6 2.3 -4.3 5.3 -4.3 c3 0 5.3 1.7 5.3 4.3 v2" fill="none" stroke="#fff" stroke-width="1.2"/>
<path d="M265.2 775 v-1.5 c0 -2 1.4 -3 3.1 -3 c1.7 0 3.1 1 3.1 3 v1.5" fill="none" stroke="#fff" stroke-width="0.8"/>
<path d="M261.5 778.5 L273.5 777.5 V790 L261.5 789 Z" fill="#000"/>
<path d="M262.8 779.6 L267 779.3 V783.2 H262.8 Z M268 779.2 L272.3 778.8 V783.2 H268 Z M262.8 784.2 H267 V788.2 L262.8 787.9 Z M268 784.2 H272.3 V788.8 L268 788.3 Z" fill="#fff"/>
<!-- mail -->
<path d="M306 775.3 L318 769.8 L330 775.3 V789 H306 Z" fill="#fff"/>
<path d="M307.3 776.2 H328.8 L320.3 781 L324.8 785.6 Z" fill="#000"/>
<!-- active app -->
<rect x="343" y="760" width="48" height="40" fill="#333333"/>
<rect x="343" y="798" width="48" height="2" fill="#6b9fd4"/>
<radialGradient id="pg" cx="0.45" cy="0.45" r="0.6"><stop offset="0" stop-color="#f4f4f4"/><stop offset="0.7" stop-color="#dcdcdc"/><stop offset="1" stop-color="#a8a8a8"/></radialGradient>
<circle cx="367" cy="780" r="10.8" fill="url(#pg)"/>
<circle cx="367" cy="780" r="8.6" fill="none" stroke="#c8c8c8" stroke-width="0.8"/>
<path d="M362.3 773.2 L368.5 783" stroke="#d80808" stroke-width="2"/>
<path d="M372.6 777 L371.2 783.8" stroke="#e07820" stroke-width="1.6"/>
<path d="M369.5 776.5 v1.5" stroke="#e0c060" stroke-width="0.9"/>
<!-- tray -->
<path d="M1035.5 782.5 L1041 777 L1046.5 782.5" fill="none" stroke="#fff" stroke-width="1.1"/>
<rect x="1058.5" y="776.5" width="13.5" height="8" fill="none" stroke="#fff" stroke-width="1"/>
<rect x="1072" y="779" width="1.2" height="3" fill="#fff"/>
<rect x="1060" y="778" width="3" height="5" fill="#fff"/>
<rect x="1081.5" y="774.5" width="4.5" height="4" fill="none" stroke="#fff"/>
<path d="M1086 774.5 H1096.5 V784.5 H1083 V778.5 M1083 784.5 V787 M1088 787.5 H1094 M1091 784.5 V787.5" fill="none" stroke="#fff" stroke-width="1"/>
<path d="M1105.5 778.5 h2.5 l4 -4 v12.5 l-4 -4 h-2.5 z" fill="none" stroke="#fff"/>
<path d="M1114 778 a3 3 0 0 1 0 5 M1116.5 776 a6 6 0 0 1 0 9 M1119 774 a9 9 0 0 1 0 13" fill="none" stroke="#fff" stroke-width="1"/>
<!-- notification -->
<path d="M1239.5 772.5 H1255.5 V784.5 H1249.5 L1247.5 786.5 L1245.5 784.5 H1239.5 Z" fill="none" stroke="#fff" stroke-width="1"/>
<rect x="1275" y="760" width="1" height="40" fill="#7a7a7a"/>
</svg>
<div class="t" style="left:1131px;top:773px;color:#fff;font-size:12px;letter-spacing:-0.2px">ENG</div>
<div class="t" style="left:1180px;top:764px;color:#fff;font-size:12px;letter-spacing:-0.4px">16:24</div>
<div class="t" style="left:1167px;top:782px;color:#fff;font-size:12px;letter-spacing:-0.55px">31.07.2017</div>

</body></html>
